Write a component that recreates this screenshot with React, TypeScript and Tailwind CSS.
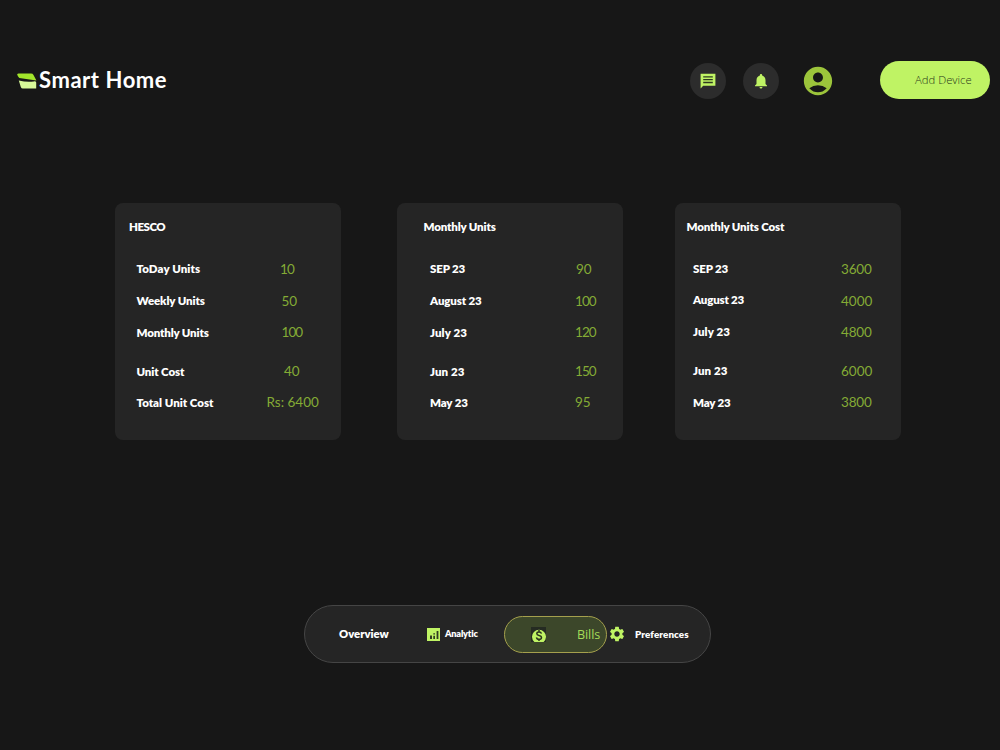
import { clsx } from "clsx";
import { MdAccountCircle, MdNotifications, MdSettings } from "react-icons/md";

type Row = { label: string; value: string; labelClass: string; valueClass: string };

type CardData = { title: string; titleClass: string; bodyClass: string; rows: Row[] };

const CARDS: CardData[] = [
  {
    title: "HESCO",
    titleClass: "pl-3.5 tracking-[-0.5px]",
    bodyClass: "pl-[21.5px]",
    rows: [
      { label: "ToDay Units", value: "10", labelClass: "tracking-[0.1px]", valueClass: "ml-[143.5px] tracking-[-0.8px]" },
      { label: "Weekly Units", value: "50", labelClass: "tracking-[-0.1px]", valueClass: "ml-[145px]" },
      { label: "Monthly Units", value: "100", labelClass: "tracking-[-0.15px]", valueClass: "ml-[145px] tracking-[-0.9px]" },
      { label: "Unit Cost", value: "40", labelClass: "tracking-[-0.1px]", valueClass: "ml-[147.5px]" },
      { label: "Total Unit Cost", value: "Rs: 6400", labelClass: "tracking-[0px]", valueClass: "ml-[130px] -mt-px" },
    ],
  },
  {
    title: "Monthly Units",
    titleClass: "pl-[26.5px] tracking-[-0.15px]",
    bodyClass: "pl-[33px]",
    rows: [
      { label: "SEP 23", value: "90", labelClass: "tracking-[-0.15px]", valueClass: "ml-[146px]" },
      { label: "August 23", value: "100", labelClass: "tracking-[-0.15px]", valueClass: "ml-[145px] tracking-[-0.9px]" },
      { label: "July 23", value: "120", labelClass: "tracking-[0.1px]", valueClass: "ml-[145px] tracking-[-0.9px]" },
      { label: "Jun 23", value: "150", labelClass: "tracking-[0.1px]", valueClass: "ml-[145px] tracking-[-0.9px]" },
      { label: "May 23", value: "95", labelClass: "tracking-[-0.15px]", valueClass: "ml-[145px] -mt-px" },
    ],
  },
  {
    title: "Monthly Units Cost",
    titleClass: "pl-[11.5px] tracking-[-0.15px]",
    bodyClass: "pl-[18px]",
    rows: [
      { label: "SEP 23", value: "3600", labelClass: "tracking-[-0.15px] -mt-[1.5px]", valueClass: "ml-[148px] tracking-[-0.2px]" },
      { label: "August 23", value: "4000", labelClass: "tracking-[-0.2px] -mt-[1.5px]", valueClass: "ml-[148px]" },
      { label: "July 23", value: "4800", labelClass: "tracking-[0.1px] -mt-[1.5px]", valueClass: "ml-[148px] tracking-[-0.2px]" },
      { label: "Jun 23", value: "6000", labelClass: "tracking-[0.1px] -mt-[1.5px]", valueClass: "ml-[148px] -mt-[1.5px]" },
      { label: "May 23", value: "3800", labelClass: "tracking-[-0.2px] -mt-[1.5px]", valueClass: "ml-[148px] -mt-[2px] tracking-[-0.2px]" },
    ],
  },
];

function Logo() {
  return (
    <div className="flex items-center">
      <svg viewBox="0 0 20 16" className="mt-px h-4 w-5" aria-hidden="true">
        <path d="M1.6 .5H14Q15.7 .5 16.5 1.9L19.4 7.6L2.3 4.9Q.2 2.8 .3 1.6Q.4 .5 1.6 .5Z" fill="#a2e52b" />
        <path d="M1.8 7.4Q10 9.5 16.8 8.4Q19 8.1 19.2 9.5V15.6H5.8Q4.4 15.6 3.8 14Z" fill="#d8f999" />
      </svg>
      <span className="ml-[2px] text-[22px] font-bold leading-6 tracking-[0.55px] text-white">
        Smart Home
      </span>
    </div>
  );
}

function MessageIcon() {
  return (
    <svg viewBox="0 0 16 16" className="size-4" aria-hidden="true">
      <path d="M.6 .8H15.4V12.8H3.2L.6 15.6Z" fill="#bff364" />
      <path d="M3.2 3.9H12.8M3.2 6.7H12.8M3.2 9.5H12.8" stroke="#2e3a20" strokeWidth="1.3" />
    </svg>
  );
}

function AnalyticIcon() {
  return (
    <svg viewBox="0 0 13 13" className="mr-[5px] size-[13px] shrink-0" aria-hidden="true">
      <path d="M0 0H13V13H0Z" fill="#bff364" />
      <path d="M3 7.5H5V11H3ZM6.3 5.2H8V6.5H6.3ZM6.3 7.8H8V11H6.3ZM9.6 3H11.4V11H9.6Z" fill="#303c21" />
    </svg>
  );
}

function BillIcon() {
  return (
    <svg viewBox="0 0 15 15" className="ml-[26px] size-[15px] shrink-0" aria-hidden="true">
      <path d="M0 0H15V15H0Z" fill="#252b22" />
      <path d="M3.4 15A7 7 0 1 1 12.6 15Z" fill="#bff364" />
      <path
        d="M10.4 6.6Q10.1 4.9 8 4.9Q5.8 4.9 5.8 6.6Q5.8 8.1 8 8.5Q10.5 9 10.5 10.7Q10.4 12.3 8 12.3Q5.7 12.3 5.5 10.4M8 3V5M8 12.2V14"
        fill="none"
        stroke="#2b351f"
        strokeWidth="1.5"
      />
    </svg>
  );
}

function Header() {
  return (
    <header className="flex h-[38px] items-center pl-[17px] pr-2.5">
      <Logo />
      <div className="ml-auto flex items-center">
        <button className="mt-[1.5px] flex size-[36px] items-center justify-center rounded-full bg-[#2c2c2c]">
          <MessageIcon />
        </button>
        <button className="ml-[17px] mt-[1.5px] flex size-[36px] items-center justify-center rounded-full bg-[#2c2c2c]">
          <MdNotifications className="size-[18px] text-[#bff364]" />
        </button>
        <MdAccountCircle className="ml-[22px] mt-[2px] size-[34px] text-[#9cc43b]" />
        <button className="ml-[45px] h-[37.5px] w-[110px] rounded-full bg-[#bff364] pl-[35px] text-left font-['Open_Sans'] text-[11.3px] font-light text-[#2c3a1b]">
          Add Device
        </button>
      </div>
    </header>
  );
}

function Card({ card }: { card: CardData }) {
  return (
    <section className="h-[236.5px] w-[226px] rounded-lg bg-[#252525] pt-4">
      <h2 className={clsx("text-[11.5px] font-extrabold leading-4 text-white", card.titleClass)}>
        {card.title}
      </h2>
      <dl className={clsx("mt-[18.3px]", card.bodyClass)}>
        {card.rows.map((row, i) => (
          <div key={row.label} className={clsx("flex h-[31.6px] items-center", i === 3 && "mt-[7.5px]")}>
            <dt
              className={clsx("w-0 whitespace-nowrap text-[11.5px] font-extrabold text-white", row.labelClass)}
            >
              {row.label}
            </dt>
            <dd className={clsx("whitespace-nowrap text-[13.5px] text-[#84ab35]", row.valueClass)}>
              {row.value}
            </dd>
          </div>
        ))}
      </dl>
    </section>
  );
}

function BottomNav() {
  return (
    <nav className="ml-[304px] mt-[165px] flex h-[58.5px] w-[407px] items-center rounded-full border border-[#454545] bg-[#252525] pt-[1.5px] font-extrabold text-white">
      <a className="ml-[34px] w-[88px] text-[11.3px]">Overview</a>
      <a className="flex w-[77px] items-center text-[9.2px]">
        <AnalyticIcon />
        <span className="-mt-px tracking-[-0.2px]">Analytic</span>
      </a>
      <a className="flex h-[37px] w-[103px] shrink-0 items-center rounded-full border border-[#a5a04d] bg-[#3c472a] font-['Open_Sans'] text-[12.6px] font-normal text-[#a5dc58]">
        <BillIcon />
        <span className="ml-[31px] mt-px tracking-[-0.1px]">Bills</span>
      </a>
      <a className="ml-px flex items-center text-[9.8px]">
        <MdSettings className="-mt-0.5 mr-[9px] size-[18px] shrink-0 text-[#bff364]" />
        <span className="tracking-[0.1px]">Preferences</span>
      </a>
    </nav>
  );
}

export default function App() {
  return (
    <div className="h-[750px] w-[1000px] overflow-hidden bg-[#171717] pt-[61px] font-['Lato',sans-serif]">
      <Header />
      <main className="ml-[115px] mt-[104px] flex">
        <Card card={CARDS[0]} />
        <div className="ml-14">
          <Card card={CARDS[1]} />
        </div>
        <div className="ml-[52px]">
          <Card card={CARDS[2]} />
        </div>
      </main>
      <BottomNav />
    </div>
  );
}
